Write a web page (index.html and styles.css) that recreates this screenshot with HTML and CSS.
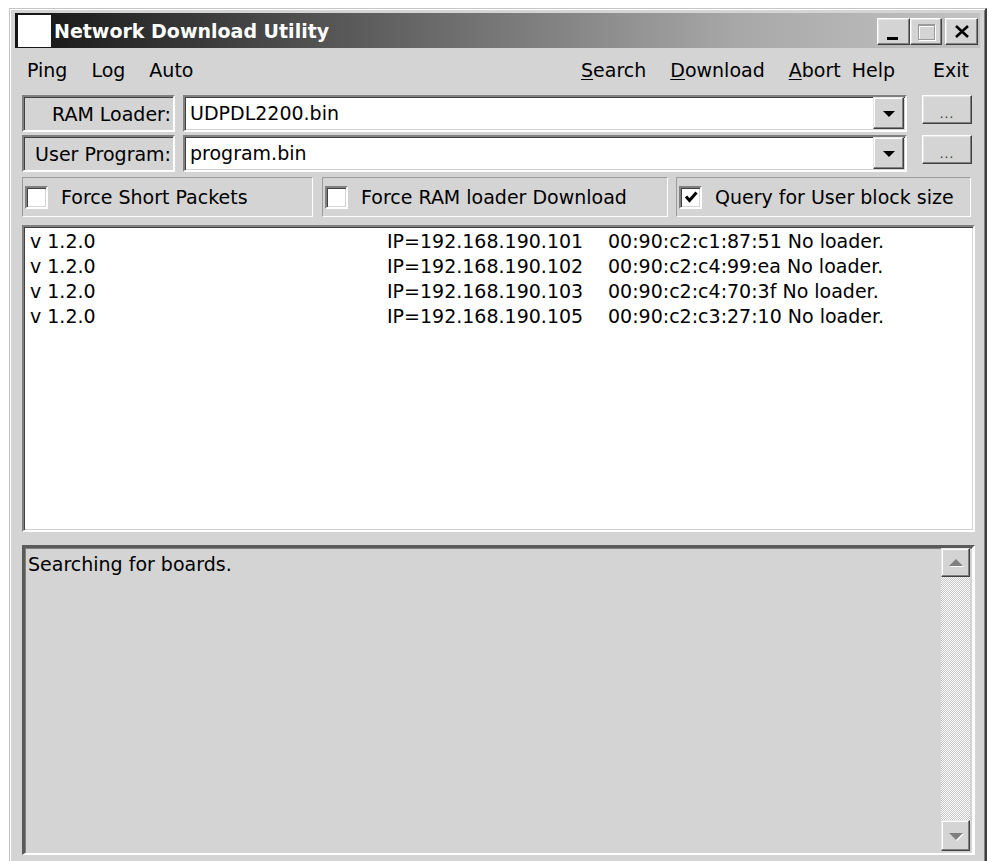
FILE: index.html
```html
<!DOCTYPE html>
<html lang="en">
<head>
<meta charset="utf-8">
<title>Network Download Utility</title>
<link rel="stylesheet" href="styles.css">
</head>
<body>
<div class="window">
  <div class="titlebar">
    <div class="app-icon"></div>
    <div class="title">Network Download Utility</div>
    <div class="caption-buttons">
      <button class="cap-btn cap-min" type="button"><span class="glyph-min"></span></button>
      <button class="cap-btn cap-max" type="button" disabled><span class="glyph-max"></span></button>
      <button class="cap-btn cap-close" type="button">
        <svg width="16" height="13" viewBox="0 0 16 13"><path d="M2 1 L14 12 M14 1 L2 12" stroke="#000" stroke-width="2.6" fill="none"/></svg>
      </button>
    </div>
  </div>

  <div class="menubar">
    <span class="menu-item">Ping</span>
    <span class="menu-item">Log</span>
    <span class="menu-item">Auto</span>
    <span class="menu-spacer"></span>
    <span class="menu-item"><u>S</u>earch</span>
    <span class="menu-item"><u>D</u>ownload</span>
    <span class="menu-item"><u>A</u>bort</span>
    <span class="menu-item menu-help">Help</span>
    <span class="menu-item menu-exit">Exit</span>
  </div>

  <div class="content">
    <div class="file-row">
      <div class="field-label">RAM Loader:</div>
      <div class="combo">
        <span class="combo-text">UDPDL2200.bin</span>
        <span class="combo-btn"><span class="arrow-down"></span></span>
      </div>
      <button class="browse-btn" type="button">...</button>
    </div>
    <div class="file-row">
      <div class="field-label">User Program:</div>
      <div class="combo">
        <span class="combo-text">program.bin</span>
        <span class="combo-btn"><span class="arrow-down"></span></span>
      </div>
      <button class="browse-btn" type="button">...</button>
    </div>

    <div class="option-row">
      <label class="option opt-short"><span class="checkbox"></span><span class="option-text">Force Short Packets</span></label>
      <label class="option opt-ram"><span class="checkbox"></span><span class="option-text">Force RAM loader Download</span></label>
      <label class="option opt-query"><span class="checkbox">
        <svg width="14" height="14" viewBox="0 0 14 14"><path d="M2 6.5 L5.5 10.5 L12.5 2.5" stroke="#000" stroke-width="3" fill="none"/></svg>
      </span><span class="option-text">Query for User block size</span></label>
    </div>

    <div class="board-list">
      <div class="board"><span>v 1.2.0</span><span>IP=192.168.190.101</span><span>00:90:c2:c1:87:51 No loader.</span></div>
      <div class="board"><span>v 1.2.0</span><span>IP=192.168.190.102</span><span>00:90:c2:c4:99:ea No loader.</span></div>
      <div class="board"><span>v 1.2.0</span><span>IP=192.168.190.103</span><span>00:90:c2:c4:70:3f No loader.</span></div>
      <div class="board"><span>v 1.2.0</span><span>IP=192.168.190.105</span><span>00:90:c2:c3:27:10 No loader.</span></div>
    </div>

    <div class="log-box">
      <div class="log-text">Searching for boards.</div>
      <div class="scrollbar">
        <span class="scroll-btn"><span class="arrow-up-dis"></span></span>
        <span class="scroll-track"></span>
        <span class="scroll-btn scroll-btn-down"><span class="arrow-down-dis"></span></span>
      </div>
    </div>
  </div>
</div>
</body>
</html>
```

FILE: styles.css
```css
* { box-sizing: border-box; }

html, body {
  margin: 0;
  height: 861px;
  overflow: hidden;
  background: #ffffff;
}

body {
  font-family: "DejaVu Sans", "Liberation Sans", sans-serif;
  font-size: 19px;
  color: #000;
}

/* outer window frame */
.window {
  margin: 8px 0 0 9px;
  width: 978px;
  height: 853px;
  overflow: hidden;
  background: #d4d4d4;
  border-top: 1px solid #c4c4c4;
  border-left: 1px solid #c4c4c4;
  border-right: 2px solid #404040;
  box-shadow: inset 1px 1px #ffffff, inset -1px 0 #808080;
  padding: 4px 5px 0 5px;
}

/* caption */
.titlebar {
  height: 35px;
  display: flex;
  align-items: center;
  background: linear-gradient(to right, #141414 0%, #5a5a5a 35%, #a8a8a8 75%, #c2c2c2 100%);
}

.app-icon {
  width: 33px;
  height: 32px;
  margin-left: 3px;
  background: #fff;
}

.title {
  margin-left: 3px;
  color: #fff;
  font-weight: bold;
  font-size: 19px;
  white-space: nowrap;
}

.caption-buttons {
  margin-left: auto;
  margin-right: 2px;
  margin-top: 2px;
  display: flex;
}

.cap-btn {
  width: 33px;
  height: 27px;
  padding: 0;
  background: #d4d4d4;
  border: 1px solid;
  border-color: #ffffff #404040 #404040 #ffffff;
  box-shadow: inset -1px -1px #808080, inset 1px 1px #e6e6e6;
  display: flex;
  align-items: center;
  justify-content: center;
}

.cap-max { width: 32px; }
.cap-close { margin-left: 3px; }

.cap-min {
  align-items: flex-end;
  justify-content: flex-start;
  padding: 0 0 4px 9px;
}

.glyph-min {
  width: 11px;
  height: 3px;
  background: #000;
}

.glyph-max {
  width: 17px;
  height: 16px;
  border: 1px solid #9a9a9a;
  border-top-width: 2px;
  box-shadow: 1px 1px #ffffff, inset 1px 1px #ffffff;
}

/* menu */
.menubar {
  height: 44px;
  display: flex;
  align-items: center;
  white-space: nowrap;
}

.menu-item { padding: 0 12px; }
.menu-spacer { flex: 1; }
.menu-help { margin-left: -13px; }
.menu-exit { margin-left: 14px; padding-right: 11px; }

u { text-decoration-thickness: 1px; text-underline-offset: 2px; }

/* main client area */
.content {
  padding: 3px 5px 0 7px;
}

.file-row {
  display: flex;
  align-items: flex-start;
  height: 37px;
  margin-bottom: 3px;
  padding-right: 3px;
}

.field-label {
  width: 153px;
  height: 37px;
  border-style: solid;
  border-width: 2px;
  border-color: #808080 #ffffff #ffffff #808080;
  box-shadow: inset 1px 1px #404040;
  display: flex;
  align-items: center;
  justify-content: flex-end;
  padding-right: 2px;
  white-space: nowrap;
}

.combo {
  flex: 1;
  height: 37px;
  margin-left: 8px;
  background: #fff;
  border-style: solid;
  border-width: 2px;
  border-color: #808080 #ffffff #ffffff #808080;
  box-shadow: inset 1px 1px #404040, inset -1px -1px #d4d4d4;
  display: flex;
  align-items: center;
  padding: 0 1px 1px 5px;
}

.combo-text { flex: 1; white-space: nowrap; }

.combo-btn {
  width: 31px;
  height: 32px;
  align-self: flex-start;
  background: #d4d4d4;
  border: 1px solid;
  border-color: #e6e6e6 #404040 #404040 #e6e6e6;
  box-shadow: inset -1px -1px #808080, inset 1px 1px #ffffff;
  display: flex;
  align-items: center;
  justify-content: center;
}

.arrow-down {
  width: 0;
  height: 0;
  border-left: 6px solid transparent;
  border-right: 6px solid transparent;
  border-top: 6px solid #000;
  margin-top: 2px;
}

.browse-btn {
  width: 50px;
  height: 29px;
  margin-left: 15px;
  padding: 8px 0 0;
  font-family: "DejaVu Sans", sans-serif;
  font-size: 12px;
  color: #303030;
  letter-spacing: 1px;
  background: #d4d4d4;
  border: 1px solid;
  border-color: #ffffff #404040 #404040 #ffffff;
  box-shadow: inset -1px -1px #808080, inset 1px 1px #e6e6e6;
}

/* option checkboxes */
.option-row {
  display: flex;
  margin-top: 5px;
  height: 40px;
}

.option {
  height: 40px;
  display: flex;
  align-items: center;
  border: 1px solid;
  border-color: #9c9c9c #ffffff #ffffff #9c9c9c;
  white-space: nowrap;
}

.opt-short { width: 291px; }
.opt-ram { width: 346px; margin-left: 9px; }
.opt-query { width: 295px; margin-left: 8px; }

.checkbox {
  width: 23px;
  height: 23px;
  margin-left: 2px;
  background: #fff;
  border: 2px solid;
  border-color: #808080 #ffffff #ffffff #808080;
  box-shadow: inset 1px 1px #404040, inset -1px -1px #d4d4d4;
  display: flex;
  align-items: center;
  justify-content: center;
}

.option-text { margin-left: 13px; }

/* board list */
.board-list {
  margin-top: 8px;
  height: 307px;
  background: #fff;
  border: 2px solid;
  border-color: #808080 #ffffff #ffffff #808080;
  box-shadow: inset 1px 1px #404040, inset -1px -1px #d4d4d4;
  padding: 2px 0 0 6px;
}

.board {
  display: grid;
  grid-template-columns: 357px 221px 1fr;
  line-height: 25px;
  white-space: nowrap;
}

/* status log */
.log-box {
  margin-top: 13px;
  height: 310px;
  display: flex;
  border-style: solid;
  border-width: 3px 3px 2px 3px;
  border-color: #5a5a5a #ffffff #ffffff #5a5a5a;
  box-shadow: inset 1px 1px #808080, inset -1px -1px #d4d4d4;
}

.log-text {
  flex: 1;
  padding: 4px 0 0 3px;
  line-height: 25px;
}

.scrollbar {
  width: 29px;
  margin: 0 2px 2px 0;
  display: flex;
  flex-direction: column;
}

.scroll-btn {
  height: 29px;
  flex: none;
  background: #d4d4d4;
  border: 1px solid;
  border-color: #e6e6e6 #404040 #404040 #e6e6e6;
  box-shadow: inset -1px -1px #808080, inset 1px 1px #ffffff;
  display: flex;
  align-items: center;
  justify-content: center;
}

.scroll-btn-down { height: 31px; }

.scroll-track {
  flex: 1;
  background-color: #ffffff;
  background-image: conic-gradient(#c6c6c6 25%, #ffffff 0 50%, #c6c6c6 0 75%, #ffffff 0);
  background-size: 2px 2px;
}

.arrow-up-dis,
.arrow-down-dis {
  width: 0;
  height: 0;
  border-left: 7px solid transparent;
  border-right: 7px solid transparent;
  filter: drop-shadow(1px 1px 0 #ffffff);
}

.arrow-up-dis { border-bottom: 7px solid #808080; }
.arrow-down-dis { border-top: 7px solid #808080; margin-top: 2px; }
```
